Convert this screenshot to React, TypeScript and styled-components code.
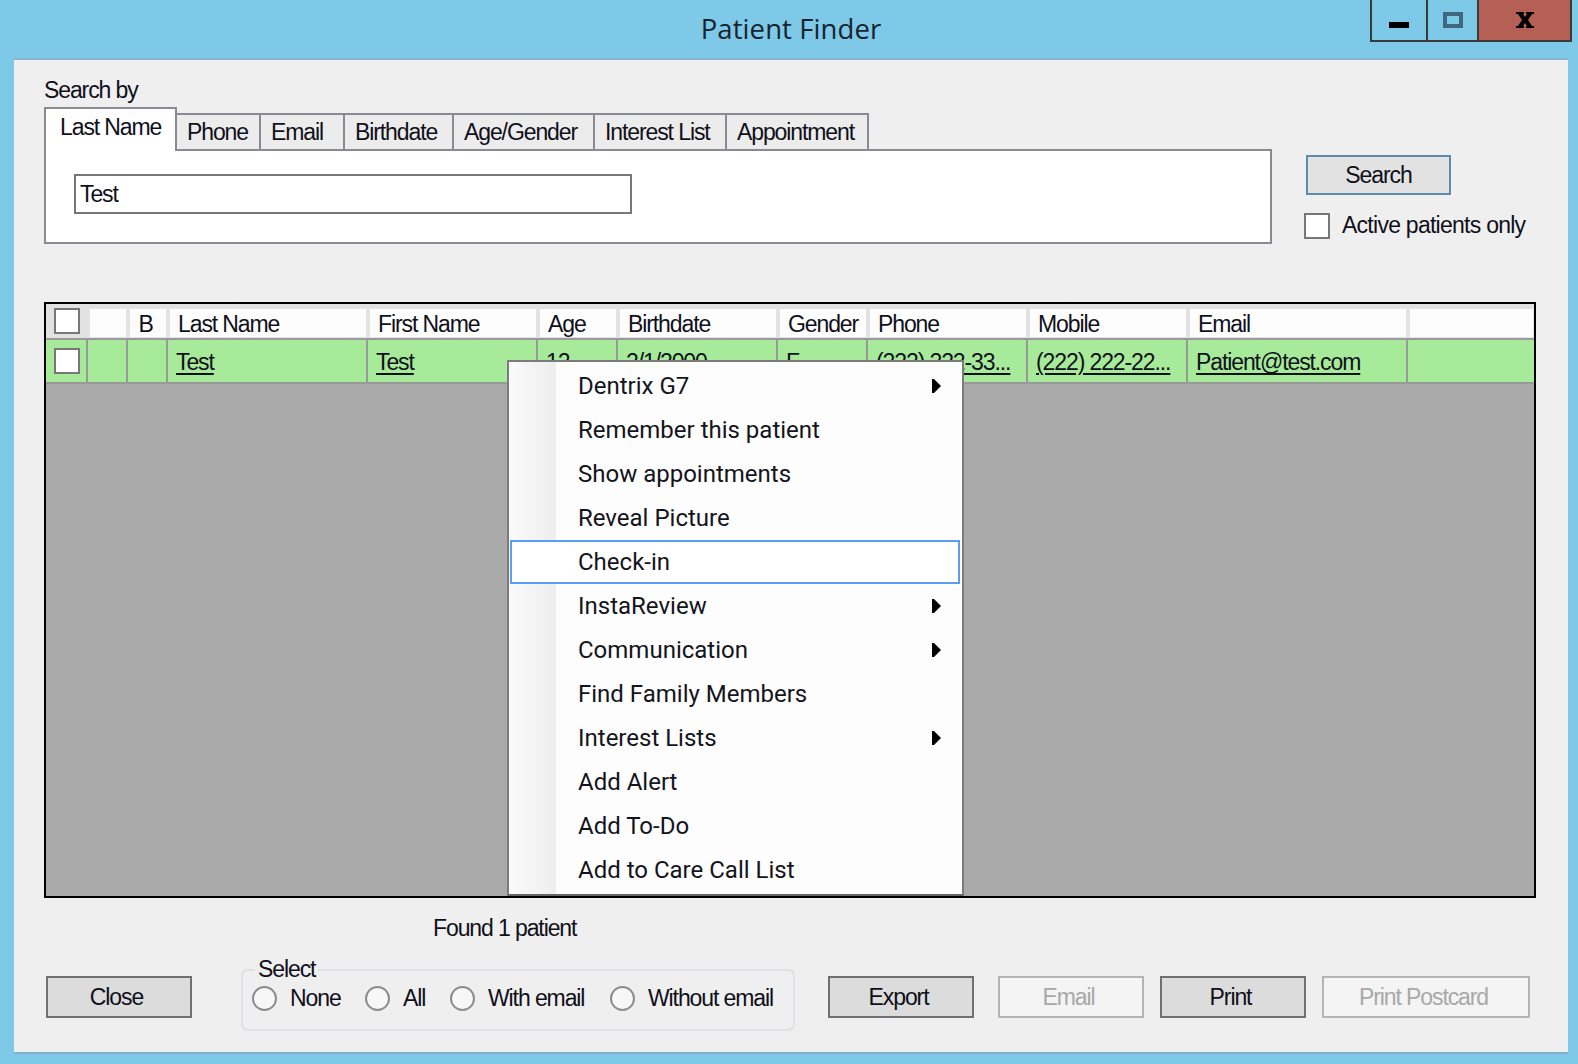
import React from 'react';
import styled, { createGlobalStyle } from 'styled-components';

const Global = createGlobalStyle`
  html, body { margin: 0; padding: 0; background: #7ec8e8; }
  * { box-sizing: border-box; }
`;

const sans = `"Liberation Sans", Arial, sans-serif`;
const menuFont = `Roboto, "Liberation Sans", sans-serif`;

const Frame = styled.div`
  width: 1578px;
  height: 1064px;
  overflow: hidden;
  background: #7ec8e8;
  display: flex;
  flex-direction: column;
  font-family: ${sans};
  font-size: 23px;
  letter-spacing: -1.1px;
  color: #10101a;
`;
const TitleBar = styled.div`
  height: 58px;
  flex: none;
  display: grid;
  grid-template-columns: 1fr auto 1fr;
  padding: 0 6px 0 10px;
`;
const Title = styled.div`
  grid-column: 2;
  font-family: "Open Sans", sans-serif;
  font-size: 27.5px;
  letter-spacing: 0.1px;
  line-height: 58px;
  color: #16242e;
`;
const WindowButtons = styled.div`
  grid-column: 3;
  justify-self: end;
  height: 42px;
  display: flex;
  border: 2px solid #3a3a3a;
  border-top: 0;
`;
const WinBtn = styled.div<{ $w: number; $close?: boolean }>`
  width: ${p => p.$w}px;
  display: flex;
  align-items: center;
  justify-content: center;
  background: ${p => (p.$close ? '#b55f55' : 'transparent')};
  & + & { border-left: 2px solid #3a3a3a; }
`;
const Client = styled.div`
  width: 1554px;
  height: 996px;
  margin-left: 14px;
  background: #efefef;
  border-top: 2px solid #8db5d2;
  border-bottom: 2px solid #82b2d0;
  padding-left: 30px;
`;
const TopRow = styled.div`
  display: flex;
  height: 184px;
`;
const SearchCol = styled.div`
  width: 1228px;
  flex: none;
`;
const SearchLabel = styled.div`
  height: 48px;
  padding-top: 18px;
  line-height: 24px;
`;
const TabStrip = styled.div`
  display: flex;
  align-items: flex-end;
  height: 41px;
`;
const Tab = styled.div<{ $w: number }>`
  width: ${p => p.$w}px;
  height: 36px;
  padding-left: 10px;
  line-height: 34px;
  background: #ececec;
  border: 2px solid #8a8a94;
  border-left: 0;
  border-bottom: 0;
  white-space: nowrap;
`;
const ActiveTab = styled.div`
  position: relative;
  z-index: 1;
  width: 133px;
  height: 44px;
  margin-bottom: -2px;
  padding-left: 14px;
  line-height: 37px;
  background: #fff;
  border: 2px solid #8a8a94;
  border-bottom: 0;
  white-space: nowrap;
`;
const TabPanel = styled.div`
  height: 95px;
  background: #fff;
  border: 2px solid #8a8a94;
  padding: 23px 0 0 28px;
`;
const SearchInput = styled.input`
  display: block;
  width: 558px;
  height: 40px;
  padding: 0 4px;
  border: 2px solid #777;
  background: #fff;
  font: inherit;
  letter-spacing: inherit;
  color: inherit;
  outline: none;
`;
const SideCol = styled.div`
  margin-left: 32px;
  padding-top: 95px;
`;
const SearchButton = styled.div`
  width: 145px;
  height: 40px;
  margin-left: 2px;
  background: #e2e2e2;
  border: 2px solid #5c8cab;
  text-align: center;
  line-height: 37px;
`;
const ActiveRow = styled.div`
  display: flex;
  align-items: center;
  gap: 12px;
  margin-top: 17px;
  letter-spacing: -0.74px;
  white-space: nowrap;
`;
const Box = styled.div`
  width: 26px;
  height: 26px;
  background: #fff;
  border: 2px solid #777;
`;
const Grid = styled.div`
  position: relative;
  width: 1492px;
  height: 596px;
  margin-top: 58px;
  background: #aaa;
  border: 2px solid #000;
`;
const HeadRow = styled.div`
  display: grid;
  grid-template-columns: 41px 40px 40px 200px 170px 80px 160px 90px 160px 160px 220px 127px;
  height: 36px;
  background: #e2e2e2;
  border-bottom: 2px solid #9a9a9a;
`;
const HeadCell = styled.div<{ $center?: boolean }>`
  margin: 5px 1px 1px 3px;
  background: #fdfdfd;
  padding: 0 ${p => (p.$center ? 5 : 0)}px 0 ${p => (p.$center ? 0 : 8)}px;
  text-align: ${p => (p.$center ? 'center' : 'left')};
  line-height: 30px;
  white-space: nowrap;
  overflow: hidden;
`;
const HeadBox = styled(Box)`
  margin: 4px 0 0 8px;
`;
const BodyRow = styled.div`
  display: grid;
  grid-template-columns: 42px 40px 40px 200px 170px 80px 160px 90px 160px 160px 220px 126px;
  height: 44px;
  background: #a6ea9a;
  border-bottom: 2px solid #999;
`;
const BodyCell = styled.div<{ $link?: boolean }>`
  border-right: 2px solid #999;
  padding-left: 8px;
  line-height: 44px;
  white-space: nowrap;
  overflow: hidden;
  text-decoration: ${p => (p.$link ? 'underline' : 'none')};
  text-decoration-thickness: 2px;
  text-underline-offset: 3px;
  &:last-child { border-right: 0; }
`;
const RowBox = styled(Box)`
  margin-top: 8px;
`;
const Menu = styled.div`
  position: absolute;
  left: 461px;
  top: 56px;
  width: 457px;
  height: 536px;
  padding-top: 2px;
  border: 2px solid #7c7c7c;
  border-bottom-color: #666;
  background: linear-gradient(to right, #fafafa, #eeeeee) no-repeat left top / 47px 100%, #fdfdfd;
  font-family: ${menuFont};
  font-size: 24px;
  letter-spacing: 0;
  color: #14141c;
`;
const MenuItem = styled.div<{ $active?: boolean }>`
  height: 44px;
  margin-left: 1px;
  display: flex;
  align-items: center;
  justify-content: space-between;
  padding: 0 21px 0 ${p => (p.$active ? 66 : 68)}px;
  ${p => p.$active && 'border: 2px solid #5a9ef0; background: #fff; margin-right: 2px; padding-right: 19px;'}
`;
const Found = styled.div`
  margin-top: 18px;
  padding-left: 389px;
  line-height: 24px;
`;
const BottomRow = styled.div`
  display: flex;
  align-items: flex-start;
  margin-top: 29px;
  padding-left: 2px;
`;
const Button = styled.div<{ $w: number; $gap: number; $off?: boolean }>`
  width: ${p => p.$w}px;
  height: 42px;
  margin-top: 7px;
  margin-left: ${p => p.$gap}px;
  padding-right: 5px;
  text-align: center;
  line-height: 39px;
  background: ${p => (p.$off ? '#f4f4f4' : '#dcdcdc')};
  border: 2px solid ${p => (p.$off ? '#b4b4b4' : '#707070')};
  color: ${p => (p.$off ? '#a8a8a8' : 'inherit')};
`;
const Group = styled.div`
  position: relative;
  width: 554px;
  height: 62px;
  margin-left: 49px;
  padding: 13px 0 0 9px;
  display: flex;
  align-items: flex-start;
  border: 2px solid #dde1e5;
  border-radius: 7px;
`;
const GroupLabel = styled.div`
  position: absolute;
  left: 12px;
  top: -14px;
  padding: 0 3px;
  line-height: 24px;
  background: #efefef;
`;
const Option = styled.div<{ $w?: number }>`
  ${p => (p.$w ? `width: ${p.$w}px;` : '')}
  display: flex;
  align-items: center;
  gap: 13px;
  line-height: 28px;
  white-space: nowrap;
`;
const Radio = styled.div`
  width: 25px;
  height: 25px;
  flex: none;
  border-radius: 50%;
  background: #f7f7f7;
  border: 2px solid #8c8c8c;
`;

const tabs: [string, number][] = [
  ['Phone', 84], ['Email', 84], ['Birthdate', 109], ['Age/Gender', 141], ['Interest List', 132], ['Appointment', 142],
];
const heads = ['Last Name', 'First Name', 'Age', 'Birthdate', 'Gender', 'Phone', 'Mobile', 'Email', ''];
const menu: [string, boolean][] = [
  ['Dentrix G7', true], ['Remember this patient', false], ['Show appointments', false], ['Reveal Picture', false],
  ['Check-in', false], ['InstaReview', true], ['Communication', true], ['Find Family Members', false],
  ['Interest Lists', true], ['Add Alert', false], ['Add To-Do', false], ['Add to Care Call List', false],
];
const options: [string, number | undefined][] = [['None', 113], ['All', 85], ['With email', 160], ['Without email', undefined]];

const Arrow = () => (
  <svg width="9" height="14" viewBox="0 0 9 14"><polygon points="0,0 2,0 9,7 2,14 0,14" fill="#000" /></svg>
);

export default function App() {
  return (
    <Frame>
      <Global />
      <TitleBar>
        <Title>Patient Finder</Title>
        <WindowButtons>
          <WinBtn $w={54}>
            <svg width="20" height="40" viewBox="0 0 20 40"><rect x="0" y="22" width="20" height="6" fill="#000" /></svg>
          </WinBtn>
          <WinBtn $w={51}>
            <svg width="20" height="16" viewBox="0 0 20 16"><rect x="2" y="2" width="16" height="12" fill="none" stroke="#3d687e" strokeWidth="4" /></svg>
          </WinBtn>
          <WinBtn $w={93} $close>
            <svg width="18" height="16" viewBox="0 0 18 16"><path d="M0 0h8v2h-1l2 3 2-3h-1V0h8v2h-2l-4 6 4 6h2v2h-8v-2h1l-2-3-2 3h1v2H0v-2h2l4-6-4-6H0z" fill="#000" /></svg>
          </WinBtn>
        </WindowButtons>
      </TitleBar>
      <Client>
        <TopRow>
          <SearchCol>
            <SearchLabel>Search by</SearchLabel>
            <TabStrip>
              <ActiveTab>Last Name</ActiveTab>
              {tabs.map(([t, w]) => <Tab key={t} $w={w}>{t}</Tab>)}
            </TabStrip>
            <TabPanel><SearchInput readOnly value="Test" /></TabPanel>
          </SearchCol>
          <SideCol>
            <SearchButton>Search</SearchButton>
            <ActiveRow><Box />Active patients only</ActiveRow>
          </SideCol>
        </TopRow>
        <Grid>
          <HeadRow>
            <HeadBox />
            <HeadCell />
            <HeadCell $center>B</HeadCell>
            {heads.map((h, i) => <HeadCell key={i}>{h}</HeadCell>)}
          </HeadRow>
          <BodyRow>
            <BodyCell><RowBox /></BodyCell>
            <BodyCell />
            <BodyCell />
            <BodyCell $link>Test</BodyCell>
            <BodyCell $link>Test</BodyCell>
            <BodyCell>12</BodyCell>
            <BodyCell>2/1/2000</BodyCell>
            <BodyCell>F</BodyCell>
            <BodyCell $link>(222) 222-33...</BodyCell>
            <BodyCell $link>(222) 222-22...</BodyCell>
            <BodyCell $link>Patient@test.com</BodyCell>
            <BodyCell />
          </BodyRow>
          <Menu>
            {menu.map(([label, sub]) => (
              <MenuItem key={label} $active={label === 'Check-in'}>
                <span>{label}</span>
                {sub && <Arrow />}
              </MenuItem>
            ))}
          </Menu>
        </Grid>
        <Found>Found 1 patient</Found>
        <BottomRow>
          <Button $w={146} $gap={0}>Close</Button>
          <Group>
            <GroupLabel>Select</GroupLabel>
            {options.map(([label, w]) => (
              <Option key={label} $w={w}><Radio />{label}</Option>
            ))}
          </Group>
          <Button $w={146} $gap={33}>Export</Button>
          <Button $w={146} $gap={24} $off>Email</Button>
          <Button $w={146} $gap={16}>Print</Button>
          <Button $w={208} $gap={16} $off>Print Postcard</Button>
        </BottomRow>
      </Client>
    </Frame>
  );
}
